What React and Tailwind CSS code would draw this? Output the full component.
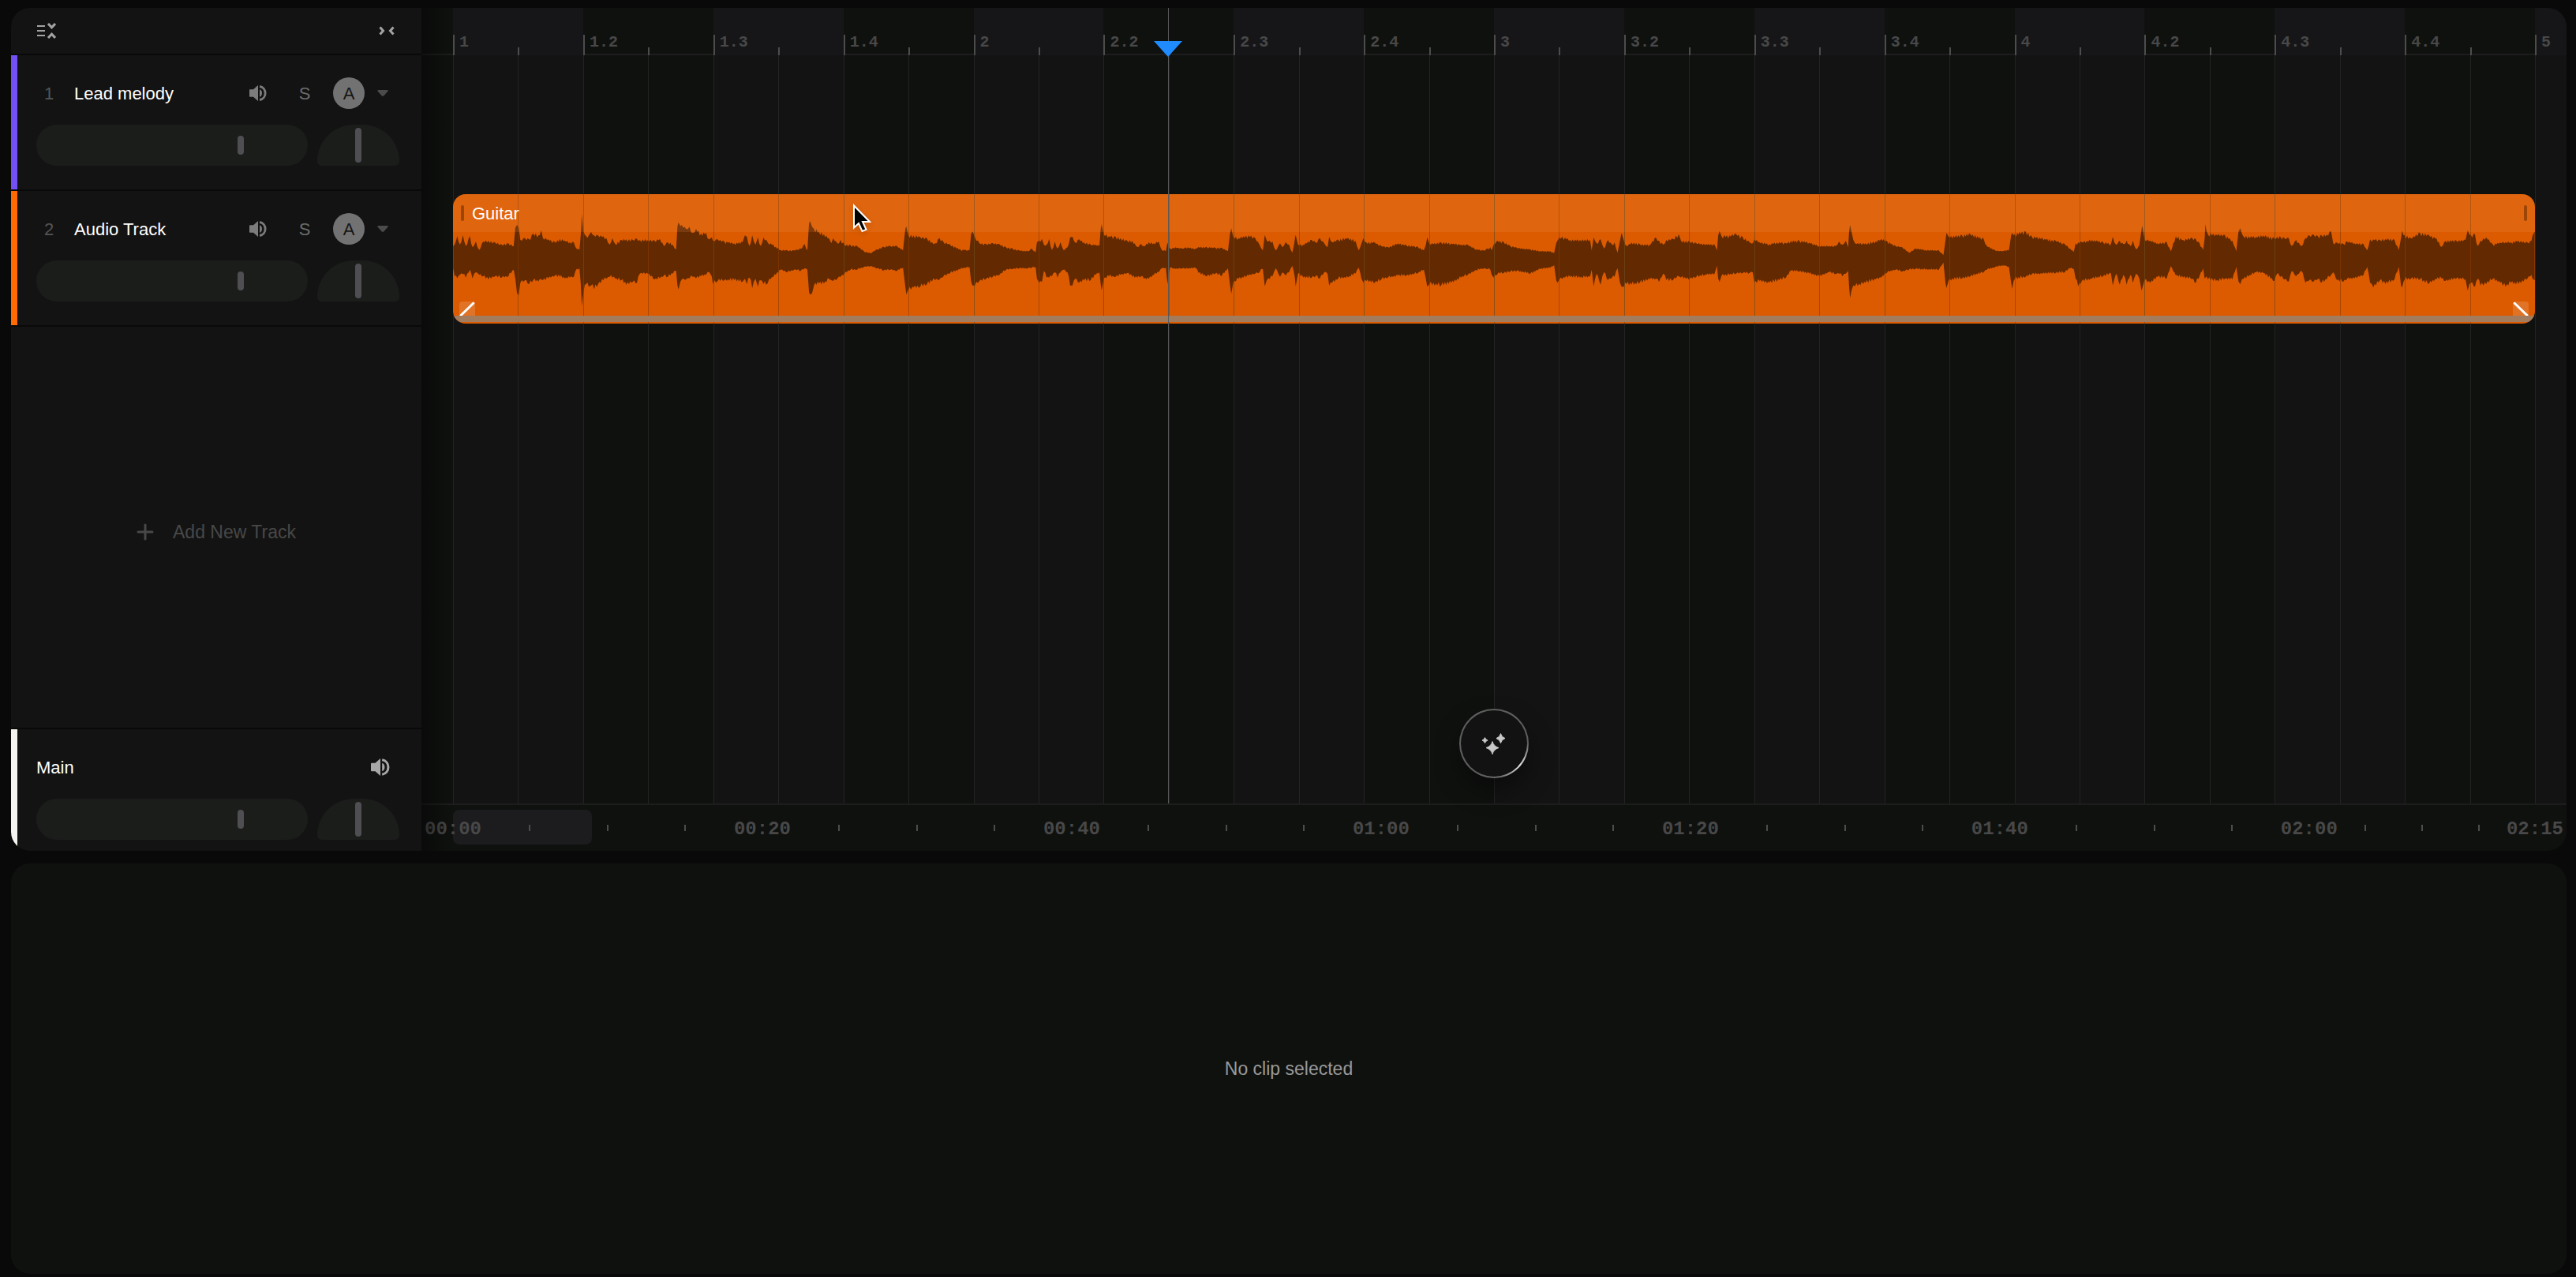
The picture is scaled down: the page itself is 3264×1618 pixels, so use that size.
import clsx from "clsx";

const TRACKS = [
  { id: 1, name: "Lead melody", color: "bg-[#7350f5]" },
  { id: 2, name: "Audio Track", color: "bg-[#ff6b00]" },
];

const BEATS = [
  "1", "1.2", "1.3", "1.4",
  "2", "2.2", "2.3", "2.4",
  "3", "3.2", "3.3", "3.4",
  "4", "4.2", "4.3", "4.4",
];

const TIME_SEGMENTS = [
  { label: "00:00", seconds: 20 },
  { label: "00:20", seconds: 20 },
  { label: "00:40", seconds: 20 },
  { label: "01:00", seconds: 20 },
  { label: "01:20", seconds: 20 },
  { label: "01:40", seconds: 20 },
  { label: "02:00", seconds: 14.6 },
];

// Envelope of the guitar take: x, upper edge, lower edge
const WAVE = [
  {
    start: -14,
    rate: 2.376,
    points: [
      [34, 245, 330], [38, 240, 360], [46, 208, 368], [54, 240, 355], [63, 204, 352], [72, 245, 365], [84, 208, 335], [92, 250, 368],
      [102, 228, 345], [112, 260, 355], [124, 228, 360], [140, 225, 372], [160, 232, 360], [180, 240, 365], [200, 235, 360], [216, 245, 335],
      [221, 175, 370], [226, 165, 425], [231, 175, 432], [236, 222, 385], [250, 215, 375], [262, 220, 390], [275, 198, 375], [290, 205, 380],
      [299, 185, 372], [304, 215, 375], [320, 220, 368], [340, 230, 358], [355, 218, 362], [370, 225, 368], [385, 230, 365], [397, 232, 362],
      [402, 250, 340], [414, 260, 330], [418, 200, 390], [421, 124, 474], [426, 190, 420], [434, 208, 390], [442, 205, 400], [449, 192, 395],
      [458, 205, 410], [470, 205, 390], [486, 208, 375], [495, 215, 370], [505, 240, 362], [513, 215, 365], [522, 238, 370], [540, 222, 375],
      [555, 220, 392], [575, 222, 380], [587, 218, 385], [596, 222, 350], [620, 222, 350], [640, 225, 372], [656, 218, 368], [668, 245, 358],
      [680, 230, 362], [695, 240, 350], [705, 258, 340], [709, 170, 395], [712, 155, 410], [718, 170, 380], [722, 165, 372], [735, 180, 372],
      [745, 172, 368], [755, 195, 362], [765, 180, 368], [780, 198, 360], [795, 195, 355], [805, 220, 345], [812, 212, 360], [816, 225, 390],
      [830, 220, 378], [850, 228, 375], [880, 235, 375], [905, 230, 380], [912, 205, 370], [918, 210, 390], [926, 245, 365], [934, 205, 405],
      [944, 240, 370], [951, 212, 400], [960, 245, 375], [968, 212, 390], [980, 230, 388], [990, 235, 370], [1005, 248, 355], [1020, 260, 335],
      [1040, 262, 345], [1060, 262, 335], [1080, 255, 340], [1092, 238, 330], [1100, 262, 335], [1105, 160, 420], [1108, 150, 430], [1114, 172, 425],
      [1120, 180, 395], [1135, 190, 388], [1150, 200, 388], [1165, 215, 370], [1172, 235, 375], [1178, 215, 378], [1190, 235, 370], [1200, 222, 362],
      [1212, 240, 350], [1230, 242, 335], [1250, 245, 335], [1270, 265, 325], [1290, 272, 322], [1310, 258, 330], [1330, 248, 338], [1350, 245, 335],
      [1370, 245, 340], [1388, 262, 328], [1395, 180, 400], [1398, 170, 430], [1404, 205, 410], [1420, 205, 402], [1440, 212, 400], [1460, 215, 390],
      [1475, 230, 380], [1485, 235, 375], [1498, 215, 372], [1510, 230, 360], [1530, 240, 348], [1567, 262, 330],
    ],
  },
  {
    start: 646,
    rate: 2.376,
    points: [
      [0, 258, 330], [20, 262, 325], [25, 200, 380], [29, 190, 395], [36, 210, 395], [50, 235, 378], [70, 238, 370], [90, 234, 362],
      [110, 238, 355], [130, 250, 335], [150, 255, 332], [170, 262, 330], [195, 265, 330], [208, 255, 328], [219, 270, 325], [223, 230, 370],
      [230, 225, 385], [238, 218, 382], [244, 240, 340], [252, 240, 365], [260, 218, 365], [268, 260, 360], [277, 228, 345], [285, 255, 365],
      [294, 230, 345], [303, 260, 335], [315, 250, 345], [323, 212, 395], [330, 210, 395], [338, 232, 370], [350, 220, 385], [365, 232, 375],
      [385, 240, 375], [400, 240, 355], [411, 245, 345], [415, 180, 390], [418, 162, 414], [424, 200, 370], [440, 208, 360], [460, 210, 362],
      [475, 215, 355], [495, 225, 348], [510, 225, 362], [525, 248, 365], [537, 238, 360], [545, 245, 370], [560, 230, 370], [575, 235, 355],
      [590, 228, 345], [598, 258, 330], [611, 265, 328], [616, 232, 390], [624, 255, 328], [640, 250, 332], [660, 255, 330], [670, 250, 332],
      [700, 255, 328], [710, 248, 348], [735, 250, 360], [760, 252, 350], [780, 252, 358], [798, 265, 330], [804, 200, 390], [808, 178, 427],
      [814, 210, 385], [830, 215, 370], [860, 205, 358], [880, 215, 350], [893, 240, 345], [903, 262, 332], [909, 203, 398], [915, 225, 375],
      [932, 228, 360], [942, 262, 330], [955, 235, 362], [962, 250, 345], [972, 230, 358], [982, 240, 345], [992, 270, 320], [1000, 215, 370],
      [1002, 203, 398], [1009, 240, 350], [1025, 240, 365], [1050, 222, 365], [1062, 232, 360], [1075, 215, 368], [1088, 235, 345], [1098, 250, 350],
      [1103, 210, 395], [1112, 230, 385], [1130, 222, 368], [1160, 214, 365], [1182, 225, 350], [1192, 262, 328], [1200, 235, 370], [1206, 215, 385],
      [1215, 232, 378], [1240, 232, 385], [1260, 245, 372], [1280, 250, 365], [1310, 235, 358], [1335, 242, 358], [1370, 248, 348], [1388, 262, 335],
      [1394, 240, 370], [1398, 212, 400], [1405, 238, 390], [1440, 232, 395], [1470, 235, 385], [1500, 240, 365], [1520, 240, 355], [1540, 255, 340],
      [1567, 262, 330],
    ],
  },
  {
    start: 1306,
    rate: 2.376,
    points: [
      [0, 262, 332], [12, 255, 332], [20, 250, 335], [24, 262, 355], [30, 240, 365], [42, 225, 350], [60, 230, 348], [80, 245, 342],
      [100, 252, 340], [140, 258, 350], [170, 264, 332], [200, 265, 328], [212, 272, 318], [218, 235, 375], [222, 225, 385], [228, 212, 372],
      [245, 213, 365], [260, 222, 362], [290, 222, 365], [320, 222, 362], [325, 262, 335], [331, 212, 398], [340, 235, 350], [352, 220, 392],
      [362, 255, 345], [374, 222, 375], [386, 240, 365], [394, 232, 362], [403, 270, 330], [410, 225, 385], [415, 195, 400], [422, 225, 400],
      [430, 245, 390], [445, 232, 392], [470, 238, 385], [500, 240, 372], [518, 212, 370], [528, 225, 382], [540, 240, 350], [550, 222, 375],
      [570, 218, 375], [587, 200, 360], [594, 225, 365], [620, 228, 370], [640, 235, 362], [670, 238, 355], [695, 240, 350], [702, 262, 320],
      [706, 205, 370], [710, 188, 382], [716, 208, 358], [740, 205, 355], [760, 200, 350], [780, 212, 348], [800, 230, 348], [810, 235, 345],
      [815, 220, 385], [830, 230, 378], [860, 238, 385], [890, 230, 375], [910, 235, 365], [925, 225, 340], [950, 225, 342], [980, 232, 350],
      [1010, 245, 360], [1040, 245, 345], [1060, 245, 352], [1070, 228, 350], [1080, 240, 360], [1090, 225, 350], [1097, 250, 340], [1100, 190, 400],
      [1103, 165, 443], [1108, 195, 410], [1118, 235, 398], [1150, 235, 385], [1180, 228, 372], [1197, 218, 365], [1215, 228, 345], [1240, 245, 335],
      [1260, 250, 342], [1280, 270, 335], [1300, 255, 332], [1330, 260, 335], [1370, 262, 335], [1384, 280, 308], [1390, 225, 385], [1393, 195, 405],
      [1400, 210, 375], [1440, 205, 368], [1465, 200, 360], [1505, 218, 345], [1515, 245, 335], [1540, 262, 325], [1567, 265, 318],
    ],
  },
  {
    start: 1966,
    rate: 2.166,
    points: [
      [0, 260, 320], [12, 262, 325], [18, 205, 385], [21, 195, 408], [28, 200, 370], [58, 190, 362], [75, 210, 352], [110, 218, 350],
      [140, 225, 348], [165, 238, 345], [180, 255, 330], [190, 268, 332], [195, 235, 370], [202, 232, 398], [212, 230, 378], [240, 222, 370],
      [270, 230, 360], [292, 238, 350], [297, 210, 395], [306, 240, 350], [316, 225, 392], [326, 238, 355], [335, 225, 392], [345, 245, 355],
      [352, 225, 385], [361, 258, 350], [370, 240, 370], [376, 180, 415], [378, 168, 405], [384, 220, 375], [400, 225, 385], [420, 235, 362],
      [445, 230, 368], [456, 265, 322], [470, 208, 358], [490, 222, 365], [515, 215, 370], [525, 220, 385], [535, 235, 360], [545, 260, 330],
      [549, 215, 370], [551, 162, 365], [558, 200, 372], [580, 200, 378], [605, 205, 370], [625, 225, 372], [636, 265, 325], [642, 190, 380],
      [647, 178, 390], [656, 210, 370], [690, 210, 345], [710, 205, 348], [740, 215, 378], [748, 210, 350], [758, 212, 362], [768, 215, 372],
      [780, 215, 380], [788, 245, 340], [800, 222, 360], [815, 245, 340], [826, 215, 385], [836, 205, 375], [848, 202, 380], [860, 208, 370],
      [870, 205, 385], [884, 202, 372], [896, 190, 355], [902, 235, 345], [912, 232, 375], [930, 238, 380], [940, 228, 370], [960, 235, 368],
      [985, 238, 355], [995, 262, 325], [1003, 220, 385], [1012, 220, 402], [1030, 222, 375], [1045, 218, 390], [1070, 222, 372], [1082, 260, 325],
      [1088, 215, 395], [1091, 187, 403], [1098, 205, 372], [1115, 215, 370], [1140, 195, 372], [1165, 205, 388], [1185, 215, 372], [1199, 248, 368],
      [1210, 225, 378], [1240, 225, 368], [1265, 222, 372], [1271, 185, 415], [1280, 205, 385], [1291, 200, 400], [1298, 245, 370], [1306, 225, 395],
      [1322, 212, 390], [1340, 240, 370], [1360, 232, 385], [1375, 230, 400], [1390, 230, 385], [1410, 225, 390], [1435, 232, 368], [1446, 225, 355],
      [1449, 205, 370], [1455, 190, 375],
    ],
  },
];

function buildWavePath() {
  const keys = WAVE.flatMap(({ start, rate, points }) =>
    points.map(([x, top, bottom]) => [start + x / rate, (top - 48) / 3, (bottom - 48) / 3])
  );
  const upper = [];
  const lower = [];
  let seed = 7;
  const random = () => {
    seed = (seed * 16807) % 2147483647;
    return seed / 2147483647;
  };

  keys.forEach(([x, top, bottom], i) => {
    upper.push(`${x.toFixed(1)} ${top.toFixed(1)}`);
    lower.push(`${x.toFixed(1)} ${bottom.toFixed(1)}`);
    const next = keys[i + 1];
    if (!next) return;
    // fine teeth between two key points
    const steps = Math.floor((next[0] - x) / 1.5);
    for (let s = 1; s < steps; s++) {
      const t = s / steps;
      const px = x + (next[0] - x) * t;
      const up = top + (next[1] - top) * t;
      const down = bottom + (next[2] - bottom) * t;
      const depth = s % 2 ? 0.08 : -0.03;
      upper.push(`${px.toFixed(1)} ${(up + (82 - up) * depth * (0.5 + random())).toFixed(1)}`);
      lower.push(`${px.toFixed(1)} ${(down - (down - 82) * depth * (0.5 + random())).toFixed(1)}`);
    }
  });

  return `M${upper.join("L")}L${lower.reverse().join("L")}Z`;
}

const WAVE_PATH = buildWavePath();

function SpeakerIcon({ className }) {
  return (
    <svg viewBox="0 0 22 20" className={className} fill="none">
      <path d="M0 6q0-.8.8-.8H5L11 0v20l-6-5.200H.8q-.8 0-.8-.8z" fill="currentColor" />
      <path d="M13 5.200c4 1.200 4 8.400 0 9.600z" fill="currentColor" />
      <path d="M13 1.500c9.500 1.500 9.500 15.500 0 17" stroke="currentColor" strokeWidth="2.800" />
    </svg>
  );
}

function CollapseTracksIcon() {
  return (
    <svg viewBox="0 0 24 20" className="h-5 w-6" fill="none" stroke="currentColor" strokeWidth="2">
      <path d="M0 4h10M0 10h10M0 16h10" />
      <path d="M14 1l4.500 4.800L23 1M14 19l4.500-4.800L23 19" strokeWidth="3" />
    </svg>
  );
}

function CollapsePanelIcon() {
  return (
    <svg viewBox="0 0 20 12" className="h-3 w-5" fill="none" stroke="currentColor" strokeWidth="3">
      <path d="M1.500 1.500L5.500 6l-4 4.500M18.500 1.500l-4 4.500 4 4.500" />
    </svg>
  );
}

function SparklesIcon() {
  return (
    <svg viewBox="0 0 34 28" className="h-7 w-[34px]" fill="currentColor" stroke="currentColor" strokeLinejoin="round">
      <path d="M15 11.500Q16.500 17.500 23 19.500Q16.500 21.500 15 27.500Q13.500 21.500 7 19.500Q13.500 17.500 15 11.500z" />
      <path d="M25.500 1.500Q26.600 6 31 7.500Q26.600 9 25.500 13.500Q24.400 9 20 7.500Q24.400 6 25.500 1.500z" />
      <path d="M5.500 6.500Q6.200 9 9 10Q6.200 11 5.500 13.500Q4.800 11 2 10Q4.800 9 5.500 6.500z" />
    </svg>
  );
}

function VolumeAndPan({ name }) {
  return (
    <div className="flex gap-3">
      <input
        type="range"
        aria-label={`${name} volume`}
        defaultValue={76}
        className="h-[52px] w-[344px] appearance-none rounded-full bg-[#1b1d1b] [&::-webkit-slider-thumb]:h-6 [&::-webkit-slider-thumb]:w-2 [&::-webkit-slider-thumb]:appearance-none [&::-webkit-slider-thumb]:rounded-full [&::-webkit-slider-thumb]:bg-[#4f4e53]"
      />
      <input
        type="range"
        aria-label={`${name} pan`}
        min={-50}
        max={50}
        defaultValue={0}
        className="h-[52px] w-[104px] appearance-none rounded-t-[50px] rounded-b-[6px] bg-[#1b1d1b] [&::-webkit-slider-thumb]:h-11 [&::-webkit-slider-thumb]:w-2 [&::-webkit-slider-thumb]:appearance-none [&::-webkit-slider-thumb]:rounded-full [&::-webkit-slider-thumb]:bg-[#4f4e53]"
      />
    </div>
  );
}

function TrackRow({ track }) {
  return (
    <div className="flex h-[172px] border-b-2 border-[#090909]">
      <div className={clsx("w-2", track.color)} />
      <div className="flex-1 pt-7 pl-6">
        <div className="mb-5 flex h-10 items-center">
          <span className="w-8 text-center text-[#555]">{track.id}</span>
          <span className="ml-4 flex-1 text-white">{track.name}</span>
          <button aria-label={`Mute ${track.name}`} className="text-[#7c7c7c]">
            <SpeakerIcon className="h-5 w-[22px]" />
          </button>
          <button aria-label={`Solo ${track.name}`} className="ml-7 w-10 text-center text-[#6c6c6c]">
            S
          </button>
          <button
            aria-label={`Automation ${track.name}`}
            className="ml-4 h-10 w-10 rounded-full bg-[#727272] text-[#161616]"
          >
            A
          </button>
          <button aria-label={`${track.name} options`} className="mr-[42px] ml-4 text-[#4b4b4b]">
            <svg viewBox="0 0 14 8" className="h-2 w-3.5" fill="currentColor">
              <path d="M1 0h12q1 0.500 0.500 1.500L8.500 7.200Q7 8.500 5.500 7.200L0.500 1.500Q0 0.500 1 0z" />
            </svg>
          </button>
        </div>
        <VolumeAndPan name={track.name} />
      </div>
    </div>
  );
}

function Sidebar() {
  return (
    <aside className="flex w-[520px] shrink-0 flex-col bg-[#131313]">
      <div className="flex h-[60px] items-center justify-between border-b-2 border-[#090909] pr-[34px] pl-[33px] text-[#a3a3a3]">
        <button aria-label="Collapse tracks">
          <CollapseTracksIcon />
        </button>
        <button aria-label="Collapse panel">
          <CollapsePanelIcon />
        </button>
      </div>
      {TRACKS.map((track) => (
        <TrackRow key={track.id} track={track} />
      ))}
      <button className="flex flex-1 items-center justify-center gap-6 border-b-2 border-[#090909] pt-3 text-[23px] text-[#484848]">
        <svg viewBox="0 0 22 22" className="h-[22px] w-[22px]" stroke="currentColor" strokeWidth="3" strokeLinecap="round">
          <path d="M11 2v18M2 11h18" />
        </svg>
        Add New Track
      </button>
      <div className="flex h-[154px]">
        <div className="w-2 bg-[#f5f4ef]" />
        <div className="flex-1 pt-7 pl-6">
          <div className="mb-5 flex h-10 items-center justify-between pr-10 text-white">
            Main
            <button aria-label="Mute main" className="text-[#a8a8a8]">
              <SpeakerIcon className="h-[22px] w-6" />
            </button>
          </div>
          <VolumeAndPan name="Main" />
        </div>
      </div>
    </aside>
  );
}

function Ruler() {
  return (
    <div className="flex h-[60px] border-b-2 border-[#1c1d1c] font-['Liberation_Mono',monospace] text-xl font-bold text-[#484848]">
      <div className="w-10" />
      {BEATS.map((beat, i) => (
        <div key={beat} className={clsx("-mb-0.5 flex flex-1 items-end", i % 2 === 0 && "bg-[#161618]")}>
          <div className="h-[26px] w-1/2 border-l-2 border-[#4c4c4c] pl-1.5 leading-5">{beat}</div>
          <div className="h-2.5 w-1/2 border-l-2 border-[#4c4c4c]" />
        </div>
      ))}
      <div className="-mb-0.5 flex w-10 items-end bg-[#161618]">
        <div className="h-[26px] border-l-2 border-[#4c4c4c] pl-1.5 leading-5">5</div>
      </div>
    </div>
  );
}

function GridLines() {
  return (
    <div className="flex [grid-area:1/1]">
      <div className="w-10" />
      {BEATS.map((beat, i) => (
        <div key={beat} className={clsx("flex flex-1", i % 2 === 0 && "bg-[#131313]")}>
          <div className="flex-1 border-l border-[#222322]" />
          <div className="flex-1 border-l border-[#222322]" />
        </div>
      ))}
      <div className="w-10 border-l border-[#222322] bg-[#131313]" />
    </div>
  );
}

function FadeHandle({ flip }) {
  return (
    <svg viewBox="0 0 20 18" className={clsx("h-[18px] w-5 rounded-t-sm bg-white/15", flip && "-scale-x-100")}>
      <path d="M2 17.500L18 2" stroke="#fff" strokeWidth="3" strokeLinecap="round" />
    </svg>
  );
}

function Clip() {
  return (
    <div className="relative mx-10 mt-1 h-[164px] overflow-hidden rounded-2xl bg-[#dc5b00]">
      <svg
        viewBox="0 0 2638 164"
        preserveAspectRatio="none"
        className="absolute inset-0 h-full w-full"
        fill="#632900"
      >
        <path d={WAVE_PATH} />
      </svg>
      <div className="absolute inset-0 flex">
        {BEATS.map((beat, i) => (
          <div key={beat} className="flex flex-1">
            <div className={clsx("flex-1", i > 0 && "border-l border-[#6b4a1c]/70")} />
            <div className="flex-1 border-l border-[#8a3a00]/60" />
          </div>
        ))}
      </div>
      <div className="relative flex h-full flex-col">
        <div className="flex h-12 items-center bg-[#f0a060]/15 px-2.5 text-white">
          <div className="h-5 w-1 rounded-full bg-[#9c4505]" />
          <span className="ml-2.5 flex-1">Guitar</span>
          <div className="h-5 w-1 rounded-full bg-[#9c4505]" />
        </div>
        <div className="flex flex-1 items-end justify-between px-2">
          <FadeHandle />
          <FadeHandle flip />
        </div>
        <div className="mb-0.5 h-2 bg-[#a37b5d]" />
      </div>
    </div>
  );
}

function Overview() {
  return (
    <div className="grid h-[60px] border-t-2 border-[#1c1d1c] font-['Liberation_Mono',monospace] text-2xl font-bold text-[#484848]">
      <div className="mx-10 py-1.5 [grid-area:1/1]">
        <div className="h-11 w-[7%] max-w-44 rounded-lg bg-[#1c1c1f]" />
      </div>
      <div className="mx-10 flex items-center [grid-area:1/1]">
        {TIME_SEGMENTS.map(({ label, seconds }) => (
          <div key={label} className="flex basis-0 items-center justify-between" style={{ flexGrow: seconds }}>
            <span className="flex w-0 justify-center pt-1">{label}</span>
            <div className="h-2 w-0.5 bg-[#4c4c4c]" />
            <div className="h-2 w-0.5 bg-[#4c4c4c]" />
            <div className="h-2 w-0.5 bg-[#4c4c4c]" />
            <div />
          </div>
        ))}
        <span className="flex w-0 justify-center pt-1">02:15</span>
      </div>
    </div>
  );
}

function Playhead() {
  return (
    <div className="pointer-events-none absolute inset-x-10 top-0 bottom-[60px]">
      <div className="absolute inset-y-0 left-[34.35%] w-px bg-[#5a5a5a]">
        <svg viewBox="0 0 36 20" className="absolute top-[42px] -left-[18px] h-5 w-9" fill="#1f8bff">
          <path d="M0 0h36L18 20z" />
        </svg>
      </div>
    </div>
  );
}

function AssistantButton() {
  return (
    <button
      aria-label="Assistant"
      className="absolute bottom-[92px] left-1/2 h-[88px] w-[88px] -translate-x-1/2 rounded-full bg-[conic-gradient(#5e5e5e_0deg,#5e5e5e_90deg,#e5e5e5_130deg,#707070_165deg,#5e5e5e_200deg,#5e5e5e_360deg)] p-0.5 text-[#c8c8c8] shadow-[0_16px_32px_rgba(0,0,0,0.4)]"
    >
      <span className="flex h-full w-full items-center justify-center rounded-full bg-[#121212]">
        <SparklesIcon />
      </span>
    </button>
  );
}

function PointerCursor() {
  return (
    <svg viewBox="0 0 24 38" className="pointer-events-none absolute top-[248px] left-[20.1%] h-[38px] w-6 drop-shadow-md">
      <path d="M2 2.500v28l6-5.500 4.500 10 5-2.200L13 23h9z" fill="#000" stroke="#fff" strokeWidth="2" />
    </svg>
  );
}

function Timeline() {
  return (
    <main className="relative flex min-w-0 flex-1 flex-col bg-[#0f110f]">
      <Ruler />
      <div className="grid flex-1">
        <GridLines />
        <div className="[grid-area:1/1]">
          <div className="h-[172px]" />
          <Clip />
        </div>
      </div>
      <Overview />
      <div className="pointer-events-none absolute inset-y-0 left-0 w-10 bg-linear-to-r from-black/40 to-transparent" />
      <Playhead />
      <AssistantButton />
      <PointerCursor />
    </main>
  );
}

export default function App() {
  return (
    <div className="flex min-h-screen flex-col gap-4 bg-[#090909] pt-2.5 pr-3 pb-1 pl-3.5 font-['Liberation_Sans',Arial,sans-serif] text-[22px]">
      <div className="flex flex-1 overflow-hidden rounded-3xl">
        <Sidebar />
        <Timeline />
      </div>
      <section className="flex h-[520px] items-center justify-center rounded-3xl bg-[#0f110f] text-[23px] text-[#999]">
        No clip selected
      </section>
    </div>
  );
}
